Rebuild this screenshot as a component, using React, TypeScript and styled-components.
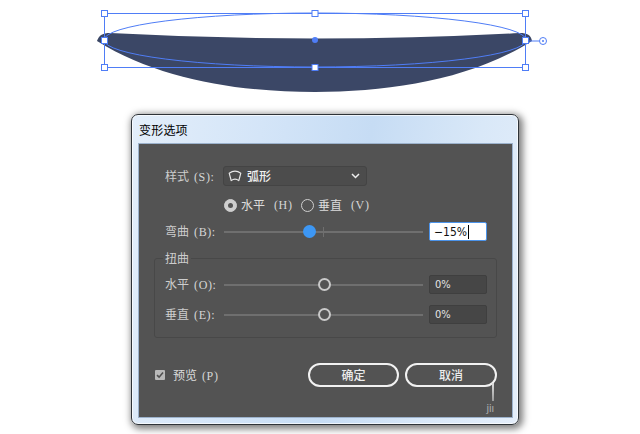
import React from "react";
import styled, { createGlobalStyle } from "styled-components";

const GlobalStyle = createGlobalStyle`
  html, body { margin: 0; padding: 0; background: #ffffff; }
  body { width: 640px; height: 434px; overflow: hidden; font-family: "Noto Sans CJK SC", "Noto Sans", sans-serif; }
  * { box-sizing: border-box; }
`;

const Page = styled.div`
  display: flex;
  flex-direction: column;
  width: 640px;
  height: 434px;
`;

const Artboard = styled.svg`
  display: block;
  width: 640px;
  height: 100px;
  flex: none;
`;

const Dialog = styled.div`
  position: relative;
  margin: 14px 0 0 131px;
  width: 388px;
  height: 311px;
  border: 1px solid #2e3338;
  border-radius: 7px;
  background: linear-gradient(100deg, #e3eefa 0%, #d4e5f8 30%, #c6dcf4 55%, #d9e8f8 80%, #e4eefa 100%);
  box-shadow: 2px 2px 7px 2px rgba(0, 0, 0, 0.5), inset 0 0 0 1px rgba(255, 255, 255, 0.7);
  display: flex;
  flex-direction: column;
  padding: 0 5px 6px 6px;
`;

const TitleBar = styled.div`
  height: 28px;
  display: flex;
  align-items: center;
  padding-left: 1px;
  font-size: 12px;
  color: #000;
  letter-spacing: 0.2px;
`;

const Panel = styled.div`
  height: 275px;
  background: #535353;
  border: 1px solid #9cb2cc;
  display: flex;
  flex-direction: column;
  color: #cfcfcf;
  font-size: 12px;
`;

const Row = styled.div<{ $top: number; $left: number; $h: number }>`
  display: flex;
  align-items: center;
  margin-top: ${(p) => p.$top}px;
  margin-left: ${(p) => p.$left}px;
  height: ${(p) => p.$h}px;
`;

const Label = styled.span<{ $w: number }>`
  width: ${(p) => p.$w}px;
  flex: none;
  white-space: nowrap;
  color: #cdcdcd;
  line-height: 14px;
`;

const Paren = styled.span`
  font-family: "Liberation Serif", serif;
  font-size: 12px;
  letter-spacing: 0.6px;
  margin-left: 5px;
  color: #d6d6d6;
`;

const Select = styled.div`
  width: 144px;
  height: 20px;
  background: #4c4c4c;
  border: 1px solid #444444;
  border-radius: 3px;
  display: flex;
  align-items: center;
  padding: 0 6px 0 4px;
  gap: 5px;
  color: #f0f0f0;
  font-weight: 500;
`;

const SelectText = styled.span`
  flex: 1;
  line-height: 14px;
`;

const RadioGroup = styled.div`
  display: flex;
  align-items: center;
`;

const RadioItem = styled.label<{ $w?: number }>`
  display: flex;
  align-items: center;
  gap: 4px;
  width: ${(p) => (p.$w ? `${p.$w}px` : "auto")};
  color: #dcdcdc;
  line-height: 14px;
`;

const RadioDot = styled.span<{ $checked?: boolean }>`
  width: 13px;
  height: 13px;
  border-radius: 50%;
  flex: none;
  border: 1.5px solid #cfcfcf;
  background: ${(p) => (p.$checked ? "#cfcfcf" : "transparent")};
  display: flex;
  align-items: center;
  justify-content: center;
  &::after {
    content: "";
    width: 5px;
    height: 5px;
    border-radius: 50%;
    background: ${(p) => (p.$checked ? "#555555" : "transparent")};
  }
`;

const Slider = styled.div`
  position: relative;
  width: 199px;
  height: 14px;
  flex: none;
  &::before {
    content: "";
    position: absolute;
    left: 0;
    right: 0;
    top: 6px;
    height: 2px;
    background: #6f6f6f;
  }
`;

const Tick = styled.span`
  position: absolute;
  top: 2px;
  width: 1px;
  height: 10px;
  background: #6f6f6f;
`;

const Thumb = styled.span<{ $filled?: boolean }>`
  position: absolute;
  top: 0;
  width: 13px;
  height: 13px;
  margin-left: -6px;
  border-radius: 50%;
  background: ${(p) => (p.$filled ? "#3d97f4" : "#535353")};
  border: ${(p) => (p.$filled ? "none" : "2.5px solid #c9c9c9")};
`;

const NumberBox = styled.div<{ $active?: boolean }>`
  margin-left: 6px;
  width: 58px;
  height: 19px;
  flex: none;
  display: flex;
  align-items: center;
  padding-left: ${(p) => (p.$active ? 4 : 5)}px;
  border-radius: 2px;
  background: ${(p) => (p.$active ? "#ffffff" : "#464646")};
  border: ${(p) => (p.$active ? "1.5px solid #4b93ea" : "1px solid #3f3f3f")};
  color: ${(p) => (p.$active ? "#111111" : "#e4e4e4")};
  font-family: "DejaVu Sans Condensed", "DejaVu Sans", sans-serif;
  font-size: ${(p) => (p.$active ? 12 : 11)}px;
`;

const Caret = styled.span`
  width: 1px;
  height: 14px;
  background: #000;
  margin-left: 1px;
`;

const Group = styled.fieldset`
  margin: 10px 0 0 15px;
  padding: 0 0 13px 0;
  width: 343px;
  min-width: 0;
  border: 1px solid #484848;
  border-radius: 3px;
  display: flex;
  flex-direction: column;
`;

const Legend = styled.legend`
  margin-left: 8px;
  padding: 0 2px;
  line-height: 14px;
  font-size: 12px;
  color: #cdcdcd;
`;

const Footer = styled.div`
  display: flex;
  align-items: center;
  margin: 25px 15px 0 16px;
  height: 24px;
  position: relative;
`;

const Check = styled.label`
  display: flex;
  align-items: center;
  gap: 8px;
  color: #dcdcdc;
  flex: 1;
  line-height: 14px;
`;

const CheckBox = styled.span`
  width: 10px;
  height: 10px;
  border-radius: 1px;
  background: #b9b9b9;
  display: flex;
  align-items: center;
  justify-content: center;
`;

const Buttons = styled.div`
  display: flex;
  gap: 6px;
`;

const Button = styled.button<{ $w: number }>`
  width: ${(p) => p.$w}px;
  height: 24px;
  border: 2px solid #f2f2f2;
  border-radius: 12px;
  background: transparent;
  color: #ececec;
  font-family: "Noto Sans CJK SC", sans-serif;
  font-size: 12px;
  font-weight: 500;
  padding: 0;
  line-height: 14px;
`;

const Watermark = styled.div`
  position: absolute;
  right: 3px;
  top: 20px;
  display: flex;
  flex-direction: column;
  align-items: center;
`;

const WaterStroke = styled.span`
  width: 2px;
  height: 18px;
  background: linear-gradient(#dddddd, #9a9a9a);
  margin-left: 6px;
`;

const WaterText = styled.span`
  font-family: "DejaVu Sans", sans-serif;
  font-size: 11px;
  color: #a8a8a8;
  line-height: 12px;
  margin-top: 2px;
  letter-spacing: -0.5px;
`;

const ArcIcon = () => (
  <svg width="14" height="12" viewBox="0 0 14 12">
    <path
      d="M1.2 3.2 Q7 -0.8 12.8 3.2 L10.8 10.6 Q7 7.6 3.2 10.6 Z"
      fill="none"
      stroke="#e8e8e8"
      strokeWidth="1.2"
      strokeLinejoin="round"
    />
  </svg>
);

const Chevron = () => (
  <svg width="9" height="6" viewBox="0 0 9 6">
    <path d="M1 1 L4.5 4.5 L8 1" fill="none" stroke="#eeeeee" strokeWidth="1.5" />
  </svg>
);

const CheckMark = () => (
  <svg width="8" height="8" viewBox="0 0 8 8">
    <path d="M1 4.2 L3.1 6.2 L7 1.6" fill="none" stroke="#505050" strokeWidth="1.6" />
  </svg>
);

const Handle = ({ x, y }: { x: number; y: number }) => (
  <rect x={x - 3} y={y - 3} width={6} height={6} fill="#ffffff" stroke="#4f7df6" strokeWidth={1} />
);

const Artwork = () => {
  const blue = "#4f7df6";
  return (
    <Artboard viewBox="0 0 640 100">
      <path
        d="M97 41 C99 35 103 33 110 33 Q315 44 520 33 C527 33 531 35 532 41 C470 80 390 92 315 92 C240 92 160 80 97 41 Z"
        fill="#3b4766"
      />
      <ellipse cx="315" cy="40" rx="211" ry="27" fill="none" stroke={blue} strokeWidth="1" />
      <rect x="104.5" y="13.5" width="421" height="54" fill="none" stroke={blue} strokeWidth="1" />
      <line x1="526" y1="41" x2="539" y2="41" stroke={blue} strokeWidth="1" />
      <circle cx="543" cy="41" r="3.5" fill="#ffffff" stroke={blue} strokeWidth="1" />
      <circle cx="543" cy="41" r="1" fill={blue} />
      <circle cx="315" cy="40" r="3" fill={blue} />
      <Handle x={104.5} y={13.5} />
      <Handle x={315} y={13.5} />
      <Handle x={525.5} y={13.5} />
      <Handle x={104.5} y={40.5} />
      <Handle x={525.5} y={40.5} />
      <Handle x={104.5} y={67.5} />
      <Handle x={315} y={67.5} />
      <Handle x={525.5} y={67.5} />
    </Artboard>
  );
};

const SliderRow = ({
  label,
  mnemonic,
  value,
  filled,
  tick,
  text,
  active,
  top,
  left,
}: {
  label: string;
  mnemonic: string;
  value: number;
  filled?: boolean;
  tick?: boolean;
  text: string;
  active?: boolean;
  top: number;
  left: number;
}) => (
  <Row $top={top} $left={left} $h={19}>
    <Label $w={59}>
      {label}
      <Paren>({mnemonic}):</Paren>
    </Label>
    <Slider>
      {tick && <Tick style={{ left: "99px" }} />}
      <Thumb $filled={filled} style={{ left: `${value}px` }} />
    </Slider>
    <NumberBox $active={active}>
      {text}
      {active && <Caret />}
    </NumberBox>
  </Row>
);

export default function App() {
  return (
    <>
      <GlobalStyle />
      <Page>
        <Artwork />
        <Dialog>
          <TitleBar>变形选项</TitleBar>
          <Panel>
            <Row $top={22} $left={26} $h={20}>
              <Label $w={58}>
                样式<Paren>(S):</Paren>
              </Label>
              <Select>
                <ArcIcon />
                <SelectText>弧形</SelectText>
                <Chevron />
              </Select>
            </Row>
            <Row $top={12} $left={85} $h={14}>
              <RadioGroup>
                <RadioItem $w={77}>
                  <RadioDot $checked />
                  水平<Paren>(H)</Paren>
                </RadioItem>
                <RadioItem>
                  <RadioDot />
                  垂直<Paren>(V)</Paren>
                </RadioItem>
              </RadioGroup>
            </Row>
            <SliderRow label="弯曲" mnemonic="B" value={85} filled tick text="−15%" active top={10} left={26} />
            <Group>
              <Legend>扭曲</Legend>
              <SliderRow label="水平" mnemonic="O" value={100} text="0%" top={10} left={10} />
              <SliderRow label="垂直" mnemonic="E" value={100} text="0%" top={11} left={10} />
            </Group>
            <Footer>
              <Check>
                <CheckBox>
                  <CheckMark />
                </CheckBox>
                <span>
                  预览<Paren>(P)</Paren>
                </span>
              </Check>
              <Buttons>
                <Button $w={91}>确定</Button>
                <Button $w={92}>取消</Button>
              </Buttons>
              <Watermark>
                <WaterStroke />
                <WaterText>jiı</WaterText>
              </Watermark>
            </Footer>
          </Panel>
        </Dialog>
      </Page>
    </>
  );
}
